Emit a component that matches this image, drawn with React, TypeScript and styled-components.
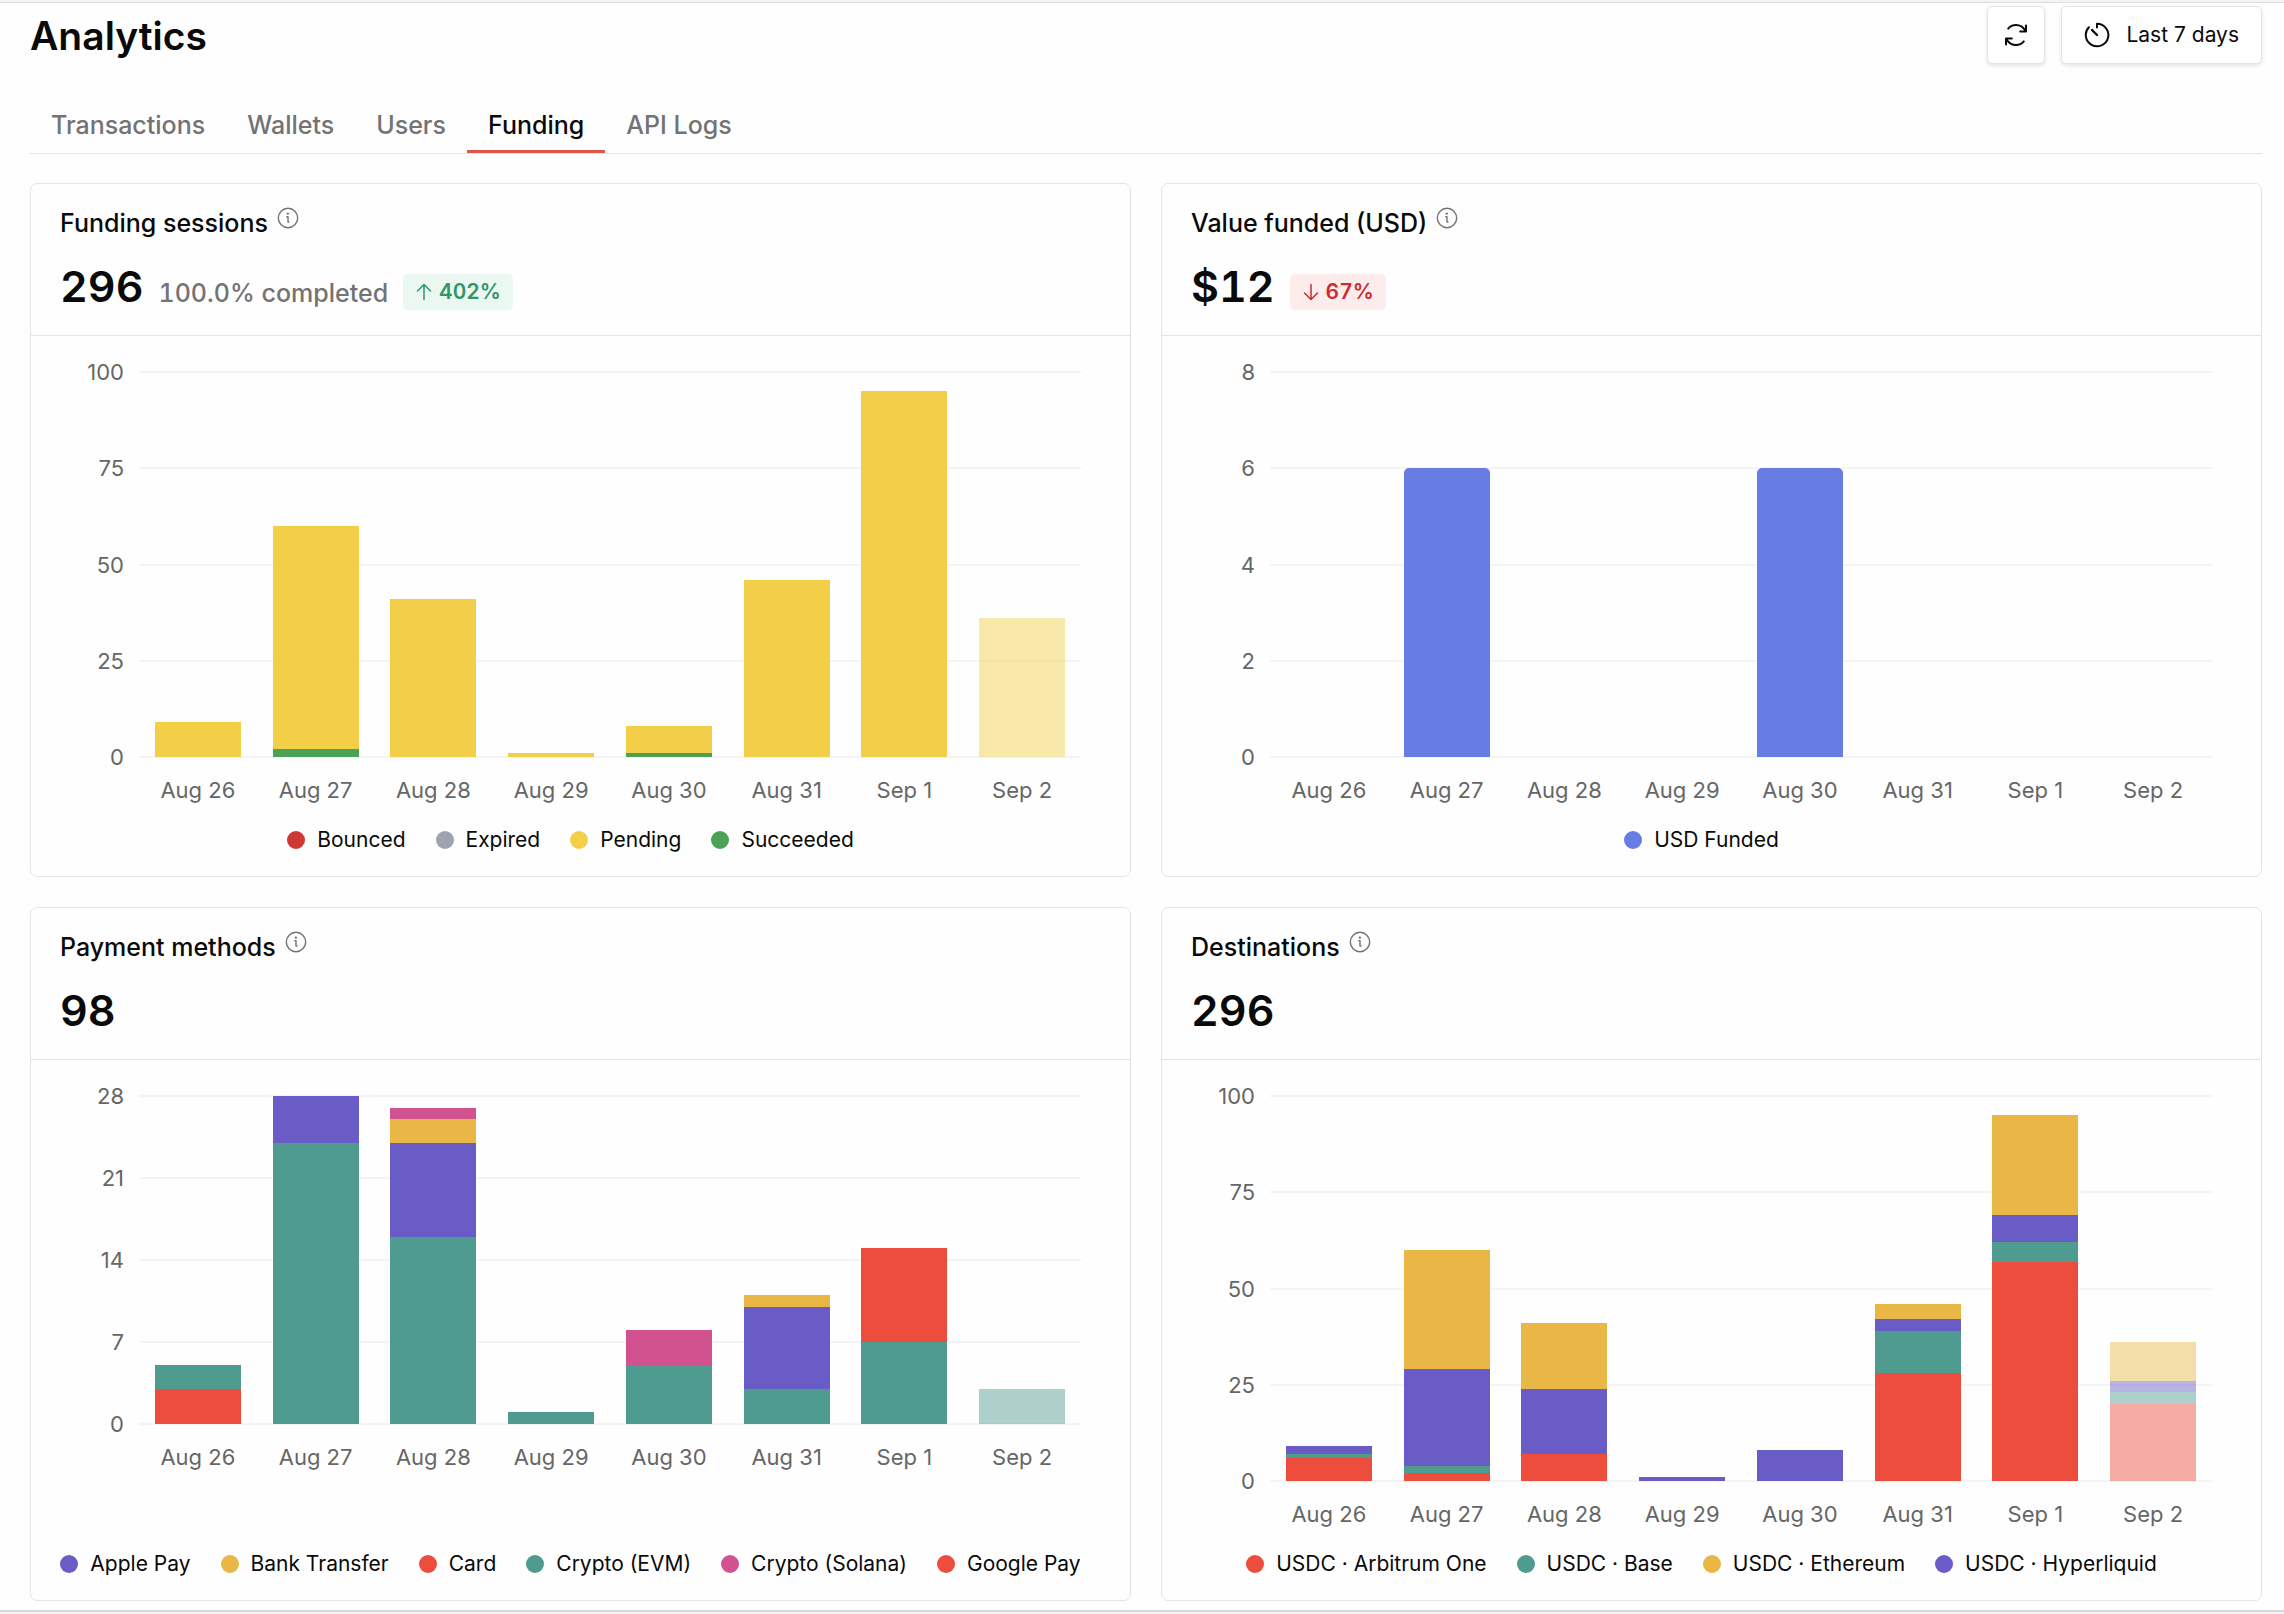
import React from "react";
import styled, { createGlobalStyle } from "styled-components";

const colors = {
  text: "#0a0a0a",
  muted: "#737373",
  axis: "#666666",
  border: "#e4e4e4",
  grid: "#f4f4f4",
  accent: "#dd5647",
};

const GlobalStyle = createGlobalStyle`
  *, *::before, *::after { box-sizing: border-box; }
  body {
    margin: 0;
    background: #fefefe;
    color: ${colors.text};
    font-family: Inter, "Liberation Sans", sans-serif;
  }
  button { font: inherit; color: inherit; cursor: pointer; }
  h1, h2, p, ul { margin: 0; padding: 0; }
`;

const TopEdge = styled.div`
  height: 3px;
  background: #f4f4f4;
  border-bottom: 1px solid #dedede;
`;

const BottomEdge = styled.div`
  height: 4px;
  margin-top: 9px;
  background: #f3f3f2;
  border-top: 2px solid #d8d8d5;
`;

const Page = styled.main`
  padding: 3px 22px 0 30px;
`;

const Header = styled.header`
  display: flex;
  align-items: flex-start;
  justify-content: space-between;
`;

const PageTitle = styled.h1`
  font-size: 39px;
  line-height: 60px;
  font-weight: 600;
`;

const Actions = styled.div`
  display: flex;
  gap: 16px;
`;

const ActionButton = styled.button`
  display: flex;
  align-items: center;
  justify-content: center;
  gap: 16px;
  min-width: 58px;
  height: 58px;
  padding: 0 22px;
  font-size: 21px;
  line-height: 28px;
  background: #fff;
  border: 1px solid ${colors.border};
  border-radius: 5px;
  box-shadow: 0 2px 4px rgba(0, 0, 0, 0.1);
`;

const IconButton = styled(ActionButton)`
  padding: 0;
`;

const Tabs = styled.div`
  display: flex;
  margin-top: 34px;
  border-bottom: 1px solid ${colors.border};
`;

const Tab = styled.button<{ $active: boolean }>`
  padding: 9px 21px;
  font-size: 25px;
  line-height: 32px;
  font-weight: 500;
  color: ${(p) => (p.$active ? colors.text : colors.muted)};
  background: none;
  border: 0;
  border-bottom: 3px solid ${(p) => (p.$active ? colors.accent : "transparent")};
`;

const CardGrid = styled.div`
  display: grid;
  grid-template-columns: repeat(auto-fit, minmax(min(900px, 100%), 1fr));
  gap: 30px;
  margin-top: 29px;
`;

const CardBox = styled.section`
  display: flex;
  flex-direction: column;
  border: 1px solid ${colors.border};
  border-radius: 7px;
`;

const CardHeader = styled.div`
  display: flex;
  flex-direction: column;
  gap: 23px;
  padding: 23px 29px 25px;
  border-bottom: 1px solid ${colors.border};
`;

const TitleRow = styled.div`
  display: flex;
  align-items: flex-start;
  gap: 9px;
`;

const CardTitle = styled.h2`
  font-size: 25px;
  line-height: 32px;
  font-weight: 500;
`;

const StatRow = styled.div`
  display: flex;
  align-items: baseline;
  gap: 15px;
  font-variant-numeric: tabular-nums;
`;

const Stat = styled.p`
  font-size: 43px;
  line-height: 48px;
  font-weight: 600;
`;

const StatNote = styled.p`
  font-size: 25px;
  line-height: 32px;
  font-weight: 500;
  color: ${colors.muted};
`;

const Badge = styled.span<{ $up: boolean }>`
  display: flex;
  align-items: center;
  align-self: flex-end;
  gap: 7px;
  height: 36px;
  padding: 0 12px 0 13px;
  font-size: 21px;
  line-height: 28px;
  font-weight: 600;
  color: ${(p) => (p.$up ? "#2f9668" : "#cc2b31")};
  background: ${(p) => (p.$up ? "#ebf7f1" : "#fcecec")};
  border-radius: 5px;
`;

const CardBody = styled.div`
  display: flex;
  flex-direction: column;
  flex: 1;
  padding: 36px 49px 22px 29px;
`;

const Chart = styled.div<{ $height: number }>`
  display: grid;
  grid-template-columns: 64px 1fr;
  grid-template-rows: ${(p) => p.$height}px 28px;
  column-gap: 15px;
  row-gap: 19px;
`;

const YAxis = styled.div`
  display: flex;
  flex-direction: column;
  justify-content: space-between;
`;

const YTick = styled.span`
  display: flex;
  align-items: center;
  justify-content: flex-end;
  height: 0;
  font-size: 22px;
  line-height: 28px;
  color: ${colors.axis};
`;

const Plot = styled.div`
  display: grid;
  grid-template-rows: 100%;
`;

const GridLines = styled.div`
  grid-area: 1 / 1;
  display: flex;
  flex-direction: column;
  justify-content: space-between;
`;

const GridLine = styled.div`
  height: 2px;
  margin: -1px 0;
  background: ${colors.grid};
`;

const Bars = styled.div`
  grid-area: 1 / 1;
  display: flex;
`;

const Band = styled.div<{ $faded: boolean }>`
  display: flex;
  flex: 1;
  flex-direction: column-reverse;
  align-items: center;
  opacity: ${(p) => (p.$faded ? 0.46 : 1)};
`;

const Segment = styled.div<{ $color: string; $rounded: boolean }>`
  width: 73%;
  background: ${(p) => p.$color};
  border-radius: ${(p) => (p.$rounded ? "5px 5px 0 0" : "0")};
`;

const XAxis = styled.div`
  grid-column: 2;
  display: flex;
`;

const XTick = styled.span`
  flex: 1;
  text-align: center;
  font-size: 22px;
  line-height: 28px;
  color: ${colors.axis};
`;

const LegendList = styled.ul`
  display: flex;
  flex-wrap: wrap;
  justify-content: center;
  gap: 4px 30px;
  margin-top: auto;
  padding-top: 22px;
  list-style: none;
`;

const LegendItem = styled.li<{ $color: string }>`
  display: flex;
  align-items: center;
  gap: 12px;
  font-size: 21px;
  line-height: 28px;
  white-space: nowrap;

  &::before {
    content: "";
    width: 18px;
    height: 18px;
    border-radius: 50%;
    background: ${(p) => p.$color};
  }
`;

const Icon = styled.svg`
  display: block;
  flex: none;
  fill: none;
  stroke: currentColor;
  stroke-linecap: round;
  stroke-linejoin: round;
`;

const InfoIcon = () => (
  <Icon width="22" height="22" viewBox="0 0 22 22" strokeWidth="1.4" color="#737373" aria-hidden="true">
    <circle cx="11" cy="11" r="9.7" />
    <path d="M9.8 9.8h1.2l0 5.2M11 15h.9" />
    <circle cx="10.8" cy="6.6" r="0.5" fill="currentColor" />
  </Icon>
);

const RefreshIcon = () => (
  <Icon width="26" height="26" viewBox="0 0 26 26" strokeWidth="2" aria-hidden="true">
    <path d="M5.200 6.600C7.200 4.200 9.800 3 13 3c4 0 7.200 2 9.400 5.600M23 3.400v6.200h-5.800" />
    <path d="M20.800 19.400C18.800 21.800 16.200 23 13 23c-4 0-7.200-2-9.400-5.600M3 22.600v-6.200h5.800" />
  </Icon>
);

const TimerIcon = () => (
  <Icon width="26" height="26" viewBox="0 0 26 26" strokeWidth="2" aria-hidden="true">
    <path d="M13 5.600V1.700A11.300 11.300 0 1 1 4.900 5.200" />
    <path d="M8 8l5 5" strokeWidth="2.400" />
  </Icon>
);

const ArrowIcon = ({ up }: { up: boolean }) => (
  <Icon width="16" height="18" viewBox="0 0 16 18" strokeWidth="1.5" aria-hidden="true">
    <path d={up ? "M8 16.500V1.500M1.500 8L8 1.500L14.500 8" : "M8 1.500v15M1.500 10L8 16.500L14.500 10"} />
  </Icon>
);

type Series = { name: string; color: string };

type CardData = {
  title: string;
  stat: string;
  note?: string;
  change?: { up: boolean; value: string };
  ticks: number[];
  height: number;
  rounded?: boolean;
  /** Listed in legend order. */
  series: Series[];
  /** Series names from the bottom of a bar to its top. */
  stack: string[];
  /** One row for each day, in the order of `stack`. */
  values: number[][];
};

const days = ["Aug 26", "Aug 27", "Aug 28", "Aug 29", "Aug 30", "Aug 31", "Sep 1", "Sep 2"];

const palette = {
  red: "#ec4d3d",
  teal: "#4f9b8f",
  gold: "#e8b745",
  purple: "#6a5cc7",
  pink: "#d2528f",
};

const cards: CardData[] = [
  {
    title: "Funding sessions",
    stat: "296",
    note: "100.0% completed",
    change: { up: true, value: "402%" },
    ticks: [100, 75, 50, 25, 0],
    height: 385,
    series: [
      { name: "Bounced", color: "#cd3834" },
      { name: "Expired", color: "#9fa3af" },
      { name: "Pending", color: "#f2ce49" },
      { name: "Succeeded", color: "#4ba154" },
    ],
    stack: ["Succeeded", "Pending"],
    values: [[0, 9], [2, 58], [0, 41], [0, 1], [1, 7], [0, 46], [0, 95], [0, 36]],
  },
  {
    title: "Value funded (USD)",
    stat: "$12",
    change: { up: false, value: "67%" },
    ticks: [8, 6, 4, 2, 0],
    height: 385,
    rounded: true,
    series: [{ name: "USD Funded", color: "#687de3" }],
    stack: ["USD Funded"],
    values: [[0], [6], [0], [0], [6], [0], [0], [0]],
  },
  {
    title: "Payment methods",
    stat: "98",
    ticks: [28, 21, 14, 7, 0],
    height: 328,
    series: [
      { name: "Apple Pay", color: palette.purple },
      { name: "Bank Transfer", color: palette.gold },
      { name: "Card", color: palette.red },
      { name: "Crypto (EVM)", color: palette.teal },
      { name: "Crypto (Solana)", color: palette.pink },
      { name: "Google Pay", color: palette.red },
    ],
    stack: ["Card", "Crypto (EVM)", "Apple Pay", "Bank Transfer", "Crypto (Solana)", "Google Pay"],
    values: [
      [3, 2, 0, 0, 0, 0],
      [0, 24, 4, 0, 0, 0],
      [0, 16, 8, 2, 1, 0],
      [0, 1, 0, 0, 0, 0],
      [0, 5, 0, 0, 3, 0],
      [0, 3, 7, 1, 0, 0],
      [0, 7, 0, 0, 0, 8],
      [0, 3, 0, 0, 0, 0],
    ],
  },
  {
    title: "Destinations",
    stat: "296",
    ticks: [100, 75, 50, 25, 0],
    height: 385,
    series: [
      { name: "USDC · Arbitrum One", color: palette.red },
      { name: "USDC · Base", color: palette.teal },
      { name: "USDC · Ethereum", color: palette.gold },
      { name: "USDC · Hyperliquid", color: palette.purple },
    ],
    stack: ["USDC · Arbitrum One", "USDC · Base", "USDC · Hyperliquid", "USDC · Ethereum"],
    values: [
      [6, 1, 2, 0],
      [2, 2, 25, 31],
      [7, 0, 17, 17],
      [0, 0, 1, 0],
      [0, 0, 8, 0],
      [28, 11, 3, 4],
      [57, 5, 7, 26],
      [20, 3, 3, 10],
    ],
  },
];

const BarChart = ({ card }: { card: CardData }) => {
  const max = card.ticks[0];
  const colorOf = (name: string) => card.series.find((s) => s.name === name)!.color;
  return (
    <Chart $height={card.height} role="group" aria-label={`${card.title} by day`}>
      <YAxis>
        {card.ticks.map((tick) => (
          <YTick key={tick}>{tick}</YTick>
        ))}
      </YAxis>
      <Plot>
        <GridLines>
          {card.ticks.map((tick) => (
            <GridLine key={tick} />
          ))}
        </GridLines>
        <Bars>
          {card.values.map((row, day) => (
            <Band key={days[day]} $faded={day === days.length - 1}>
              {row.map((value, i) =>
                value > 0 ? (
                  <Segment
                    key={card.stack[i]}
                    $color={colorOf(card.stack[i])}
                    $rounded={Boolean(card.rounded)}
                    style={{ height: `${(value / max) * 100}%` }}
                  />
                ) : null
              )}
            </Band>
          ))}
        </Bars>
      </Plot>
      <XAxis>
        {days.map((day) => (
          <XTick key={day}>{day}</XTick>
        ))}
      </XAxis>
    </Chart>
  );
};

const ChartCard = ({ card }: { card: CardData }) => (
  <CardBox>
    <CardHeader>
      <TitleRow>
        <CardTitle>{card.title}</CardTitle>
        <InfoIcon />
      </TitleRow>
      <StatRow>
        <Stat>{card.stat}</Stat>
        {card.note && <StatNote>{card.note}</StatNote>}
        {card.change && (
          <Badge $up={card.change.up}>
            <ArrowIcon up={card.change.up} />
            {card.change.value}
          </Badge>
        )}
      </StatRow>
    </CardHeader>
    <CardBody>
      <BarChart card={card} />
      <LegendList>
        {card.series.map((s) => (
          <LegendItem key={s.name} $color={s.color}>
            {s.name}
          </LegendItem>
        ))}
      </LegendList>
    </CardBody>
  </CardBox>
);

const tabs = ["Transactions", "Wallets", "Users", "Funding", "API Logs"];

export default function App() {
  const [active, setActive] = React.useState("Funding");
  return (
    <>
      <GlobalStyle />
      <TopEdge />
      <Page>
        <Header>
          <PageTitle>Analytics</PageTitle>
          <Actions>
            <IconButton type="button" aria-label="Refresh">
              <RefreshIcon />
            </IconButton>
            <ActionButton type="button">
              <TimerIcon />
              Last 7 days
            </ActionButton>
          </Actions>
        </Header>
        <Tabs role="tablist">
          {tabs.map((tab) => (
            <Tab
              key={tab}
              type="button"
              role="tab"
              aria-selected={tab === active}
              $active={tab === active}
              onClick={() => setActive(tab)}
            >
              {tab}
            </Tab>
          ))}
        </Tabs>
        <CardGrid>
          {cards.map((card) => (
            <ChartCard key={card.title} card={card} />
          ))}
        </CardGrid>
      </Page>
      <BottomEdge />
    </>
  );
}
